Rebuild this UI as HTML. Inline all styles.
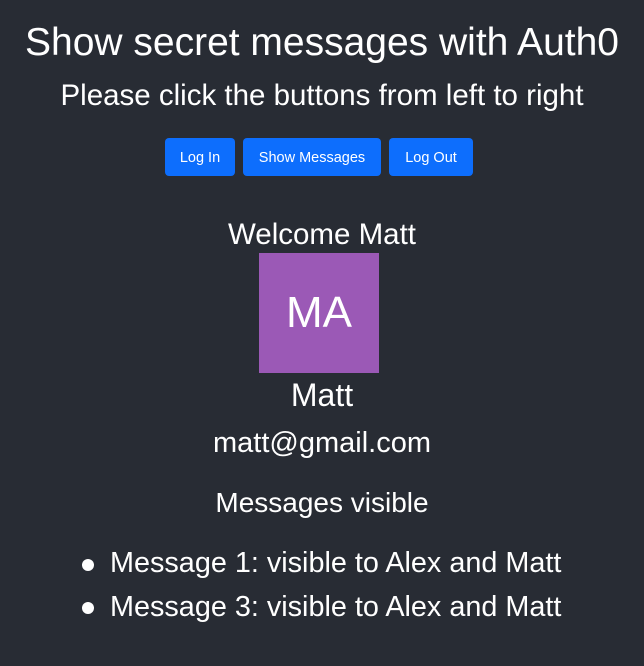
<!DOCTYPE html>
<html><head><meta charset="utf-8"><style>
html,body{margin:0;padding:0;}
body{width:644px;height:666px;background:#282c34;color:#fff;font-family:"Liberation Sans",sans-serif;position:relative;overflow:hidden;}
.c{position:absolute;left:0;width:644px;text-align:center;white-space:nowrap;}
.btn{position:absolute;top:138px;height:38px;background:#0d6efd;border-radius:4px;font-size:14.5px;line-height:41px;text-align:center;color:#fff;}
.av{position:absolute;left:259px;top:253px;width:120px;height:120px;background:#9b59b6;font-size:44px;line-height:120px;text-align:center;}
.li{position:absolute;left:110px;font-size:28.8px;white-space:nowrap;}
.dot{position:absolute;left:82px;width:12px;height:12px;border-radius:50%;background:#fff;}
</style></head><body>
<div class="c" style="top:20px;font-size:39px;line-height:46px;">Show secret messages with Auth0</div>
<div class="c" style="top:78px;font-size:29.5px;line-height:36px;">Please click the buttons from left to right</div>
<div class="btn" style="left:165px;width:70px;">Log In</div>
<div class="btn" style="left:243px;width:138px;">Show Messages</div>
<div class="btn" style="left:389px;width:84px;">Log Out</div>
<div class="c" style="top:217px;font-size:29.5px;line-height:36px;">Welcome Matt</div>
<div class="av">MA</div>
<div class="c" style="top:376px;font-size:32px;line-height:38px;">Matt</div>
<div class="c" style="top:425px;font-size:29px;line-height:36px;">matt@gmail.com</div>
<div class="c" style="top:485px;font-size:28px;line-height:36px;">Messages visible</div>
<div class="dot" style="top:559px;"></div>
<div class="li" style="top:545px;line-height:36px;">Message 1: visible to Alex and Matt</div>
<div class="dot" style="top:602px;"></div>
<div class="li" style="top:589px;line-height:36px;">Message 3: visible to Alex and Matt</div>
</body></html>
